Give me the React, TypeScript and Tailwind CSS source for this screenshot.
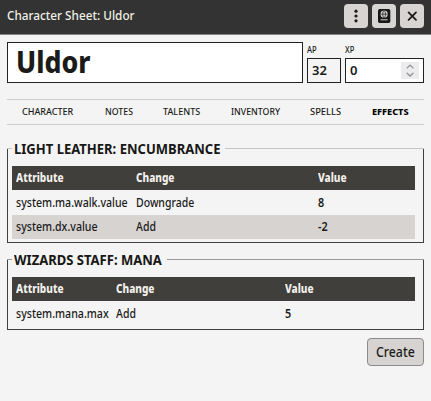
import type { ReactNode } from "react";

function Txt({ children, className = "" }: { children: ReactNode; className?: string }) {
  return <span className={`inline-block origin-left whitespace-nowrap ${className}`}>{children}</span>;
}

function HeaderButton({ label, children }: { label: string; children: ReactNode }) {
  return (
    <button aria-label={label} className="flex h-6 w-6 items-center justify-center rounded-[4px] bg-[#d8d4d1] text-[#1b1b19]">
      {children}
    </button>
  );
}

type Row = { attribute: string; change: string; value: string };

function EffectGroup({ title, titleClass, lineClass, cols, rows, className }: {
  title: string; titleClass: string; lineClass: string; cols: string; rows: Row[]; className: string;
}) {
  return (
    <section className={`flex flex-col ${className}`}>
      <div className="flex h-[19px] items-center">
        <div className={`h-px w-[5px] ${lineClass}`} />
        <h2 className={`shrink-0 pl-[2px] text-[14px] leading-[19px] font-bold text-[#171715] ${titleClass}`}>
          <Txt className="scale-x-[.93]">{title}</Txt>
        </h2>
        <div className={`h-px flex-1 ${lineClass}`} />
      </div>
      <div className="-mt-[9px] flex-1 border-x border-b border-[#3f3f3f] pt-[17px] pr-2 pl-1">
        <div className={`grid h-6 items-center bg-[#413f3b] pl-1 text-[12px] font-extrabold text-[#f3f1ed] ${cols}`}>
          <Txt className="scale-x-[.84]">Attribute</Txt>
          <Txt className="scale-x-[.84]">Change</Txt>
          <Txt className="scale-x-[.84]">Value</Txt>
        </div>
        {rows.map((r) => (
          <div key={r.attribute} className={`grid h-[25px] items-center pl-1 text-[12px] font-medium even:bg-transparent odd:h-6 odd:bg-[#d6d3d1] ${cols}`}>
            <Txt className="scale-x-[.885]">{r.attribute}</Txt>
            <Txt className="scale-x-[.875]">{r.change}</Txt>
            <Txt className="scale-x-[.9] font-semibold">{r.value}</Txt>
          </div>
        ))}
      </div>
    </section>
  );
}

export default function App() {
  return (
    <main className="h-[401px] w-[431px] overflow-hidden bg-[#f4f4f4] font-['Noto_Sans',sans-serif] text-[#1b1b19]">
      <header className="flex h-[35px] items-center justify-between border-b border-[#858585] bg-[#333333] pr-[7px] pb-[2px] pl-[7px]">
        <Txt className="scale-x-[.905] text-[13px] font-medium text-[#f0f0e6]">Character Sheet: Uldor</Txt>
        <div className="flex gap-1">
          <HeaderButton label="Menu">
            <svg width="24" height="24" fill="currentColor"><circle cx="12" cy="7.2" r="1.6" /><circle cx="12" cy="12" r="1.6" /><circle cx="12" cy="16.8" r="1.6" /></svg>
          </HeaderButton>
          <HeaderButton label="Passport">
            <svg width="24" height="24" fill="none"><rect x="6" y="5" width="12.3" height="14" rx="1.7" fill="#171717" /><circle cx="12.1" cy="10.2" r="3.6" fill="#d8d4d1" /><ellipse cx="12.1" cy="10.2" rx="1.4" ry="3.4" stroke="#171717" strokeWidth=".7" /><path d="M8.5 10.2h7.2" stroke="#171717" strokeWidth=".7" /><path d="M9 15.8h6.2" stroke="#d8d4d1" strokeWidth="1" strokeLinecap="round" /></svg>
          </HeaderButton>
          <HeaderButton label="Close">
            <svg width="24" height="24" stroke="currentColor" strokeWidth="1.8" strokeLinecap="round"><path d="m8.6 8.4 7.4 7.4M16 8.4l-7.4 7.4" /></svg>
          </HeaderButton>
        </div>
      </header>

      <div className="flex h-[48px] items-end gap-1 pr-[6px] pl-[7px]">
        <div className="flex h-[41px] w-[296px] items-center border border-[#222] bg-white pb-[2px] pl-2">
          <Txt className="scale-x-[.89] text-[30px] leading-[37px] font-extrabold">Uldor</Txt>
        </div>
        <div className="flex w-[34px] flex-col">
          <Txt className="h-4 scale-x-[.95] text-[8px] leading-4 font-medium">AP</Txt>
          <div className="flex h-[25px] items-center border border-[#222] pl-1 text-[13px] font-semibold"><Txt>32</Txt></div>
        </div>
        <div className="flex w-[79px] flex-col">
          <Txt className="h-4 scale-x-[.95] text-[8px] leading-4 font-medium">XP</Txt>
          <div className="flex h-[25px] items-center justify-between border border-[#222] bg-white pr-1 pl-1 text-[13px] font-semibold">
            <Txt>0</Txt>
            <svg width="18" height="17" fill="none" stroke="#8c8c8c" strokeWidth="1.3" strokeLinecap="round" strokeLinejoin="round"><rect width="18" height="17" fill="#ececee" stroke="none" /><path d="m6.2 5.9 2.9-2.8L12 5.900M6.200 11.300l2.900 2.800 2.900-2.800" /></svg>
          </div>
        </div>
      </div>

      <nav className="mt-4 mr-[7px] ml-[7px] grid h-[26px] grid-cols-[83px_58px_68px_79px_62px_1fr] items-center border-y border-[#cfcfcf] pb-px pl-[15px] text-[9px] font-medium">
        <Txt className="scale-x-[1]">CHARACTER</Txt>
        <Txt className="scale-x-[.97]">NOTES</Txt>
        <Txt className="scale-x-[1]">TALENTS</Txt>
        <Txt className="scale-x-[.97]">INVENTORY</Txt>
        <Txt className="scale-x-[1.04]">SPELLS</Txt>
        <Txt className="scale-x-[1.02] font-extrabold text-black">EFFECTS</Txt>
      </nav>

      <EffectGroup
        title="LIGHT LEATHER: ENCUMBRANCE" titleClass="w-[213px]" lineClass="bg-[#c5c5c5]"
        cols="grid-cols-[120px_182px_1fr]" className="mt-[14px] mr-[7px] ml-[7px] h-[104px]"
        rows={[{ attribute: "system.ma.walk.value", change: "Downgrade", value: "8" }, { attribute: "system.dx.value", change: "Add", value: "-2" }]}
      />
      <EffectGroup
        title="WIZARDS STAFF: MANA" titleClass="w-[155px]" lineClass="bg-[#999]"
        cols="grid-cols-[100px_169px_1fr]" className="mt-[7px] mr-[7px] ml-[7px] h-[80px]"
        rows={[{ attribute: "system.mana.max", change: "Add", value: "5" }]}
      />

      <div className="mt-2 flex justify-end pr-[7px]">
        <button className="flex h-7 w-[57px] items-center rounded-[4px] border border-[#8b8b8b] bg-[#d6d3d1] pb-[2px] pl-2 text-[14px] font-medium">
          <Txt className="scale-x-[.88]">Create</Txt>
        </button>
      </div>
    </main>
  );
}
